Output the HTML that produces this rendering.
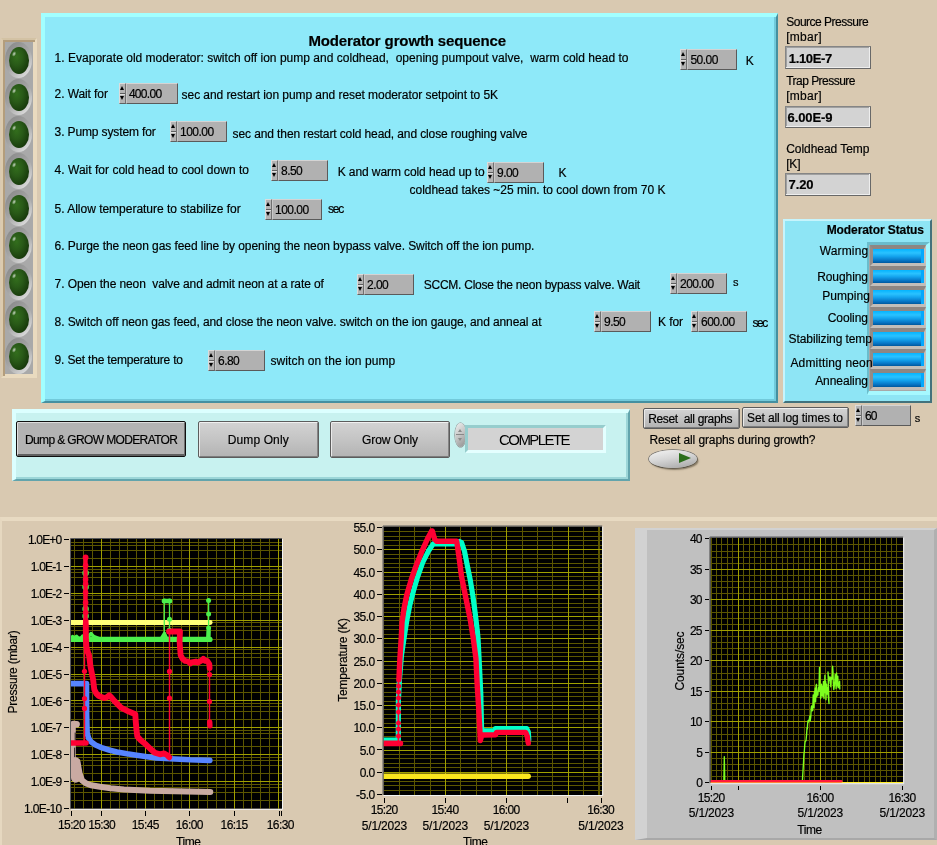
<!DOCTYPE html>
<html>
<head>
<meta charset="utf-8">
<title>Moderator growth sequence</title>
<style>
html,body{margin:0;padding:0;}
body{width:937px;height:845px;overflow:hidden;background:#d9c9b1;position:relative;font-family:"Liberation Sans",sans-serif;font-size:12px;color:#000;}
.t{position:absolute;white-space:pre;line-height:normal;-webkit-text-stroke:0.18px #000;}
.abs{position:absolute;}
/* big cyan panel */
#main{position:absolute;left:41px;top:13px;width:737px;height:389.8px;background:#8ee9f9;box-sizing:border-box;border-style:solid;border-width:4px 2px 2px 4px;border-color:#a2ffff #4590a0 #4590a0 #a2ffff;box-shadow:inset -2px -2px 0 #72cadb;}
/* LED column */
#ledframe{position:absolute;left:1px;top:38px;width:36px;height:340px;box-sizing:border-box;border-style:solid;border-width:2px;border-color:#d3c2a4 #e9dabf #e9dabf #dccbae;background:#a9a9a9;box-shadow:inset 2px 2px 0 #b39d7c, inset -2px -2px 0 #e9dabf;}
.bez{position:absolute;width:27px;height:36px;border-radius:50%;background:linear-gradient(135deg,#8c8c8c 12%,#a6a6a6 50%,#dedede 90%);}
.led{position:absolute;width:19.8px;height:27px;border-radius:50%;background:radial-gradient(ellipse at 38% 36%,#336e1d 0%,#295a18 35%,#1a3e0d 70%,#0a1c03 100%);}
.led:after{content:"";position:absolute;left:3.6px;top:4.8px;width:4.4px;height:6.4px;border-radius:50%;background:radial-gradient(ellipse at center,rgba(255,255,255,.75) 0%,rgba(255,255,255,0) 70%);transform:rotate(25deg);}
/* numeric controls */
.spin{position:absolute;box-sizing:border-box;background:#b4b4b4;border-style:solid;border-width:1px;border-color:#dcdcdc #707070 #606060 #dcdcdc;}
.spin i{position:absolute;left:0;width:0;height:0;}
.spin .up{left:0;top:1.9px;border-left:2.5px solid transparent;border-right:2.5px solid transparent;border-bottom:4.4px solid #000;}
.spin .dn{left:0;bottom:2.6px;border-left:2.5px solid transparent;border-right:2.5px solid transparent;border-top:4.4px solid #000;}
.spin .mid{left:0;top:50%;width:5px;height:1px;margin-top:-1px;background:#606060;border-bottom:1px solid #e0e0e0;}
.nbox{position:absolute;box-sizing:border-box;background:#b1b1b1;border-style:solid;border-width:1px;border-color:#d4d4d4 #5a5a5a #5a5a5a #c8c8c8;}
/* indicators */
.ind{position:absolute;box-sizing:border-box;background:#d3d3d3;border-style:solid;border-width:1.5px;border-color:#858585 #686868 #686868 #858585;box-shadow:inset -1px -1px 0 #eeeeee, inset 1px 1px 0 #a0a0a0;}
/* status panel */
#status{position:absolute;left:783px;top:219px;width:149px;height:184px;box-sizing:border-box;background:#8ee5f5;border-style:solid;border-width:2px;border-color:#c6f4fc #42727c #42727c #c6f4fc;}
.bl{position:absolute;left:869.5px;width:56.2px;height:20.7px;box-sizing:border-box;border-style:solid;border-width:4px 2.8px 3px 3.2px;border-color:#8e8682 #c4c0bc #c2beba #948c88;background:linear-gradient(180deg,#04b4ff 0%,#2ac2ff 28%,#14a4ee 52%,#0674c4 82%,#00589e 100%);}
.bl:after{content:"";position:absolute;right:0;top:0;bottom:0;width:2.8px;background:#04a8fc;}
#arr{position:absolute;left:866.7px;top:241.7px;width:63px;height:153.5px;box-sizing:border-box;border-style:solid;border-width:3.3px 4px 4.2px 2.8px;border-color:#6abccc #a6f8ff #a6f8ff #6abccc;background:#a8a8a8;}
/* buttons */
.btn{position:absolute;box-sizing:border-box;background:linear-gradient(180deg,#d2d2d2 0%,#c4c4c4 50%,#b4b4b4 100%);border-style:solid;border-width:1.5px;border-color:#f0f0f0 #858585 #7c7c7c #eaeaea;outline:1px solid #5c5c5c;border-radius:1px;}
.btn.def{outline:1.2px solid #101010;background:#b3b3b3;border-width:1.5px 1px 2px 1.5px;border-color:#dcdcdc #707070 #606060 #dedede;}
#ctl{position:absolute;left:12px;top:409px;width:618px;height:72px;box-sizing:border-box;background:#c8f2f0;border-style:solid;border-width:4px 2px 2px 4px;border-color:#dcffff #62a4ac #62a4ac #dcffff;box-shadow:inset -2px -2px 0 #9cd6d8;}
/* graph region */
#gpanel{position:absolute;left:0;top:517px;width:937px;height:328px;box-sizing:border-box;border-top:4px solid #e8dac2;border-left:2px solid #e6d8c0;background:#d9c9b1;}
#g3{position:absolute;left:635px;top:528px;width:302px;height:312px;box-sizing:border-box;background:#c0c0c0;border-top:2px solid #d2d2d2;border-left:12px solid #d2d2d2;border-right:3px solid #b0b0b0;border-bottom:2px solid #a8a8a8;}
svg{position:absolute;left:0;top:0;}
</style>
</head>
<body>
<div id="root" style="position:absolute;left:0;top:0;width:937px;height:845px;will-change:transform;">
<div id="ledframe"></div>
<div class="bez" style="left:5.4px;top:42.3px"></div>
<div class="led" style="left:8.8px;top:46.7px"></div>
<div class="bez" style="left:5.4px;top:79.3px"></div>
<div class="led" style="left:8.8px;top:83.7px"></div>
<div class="bez" style="left:5.4px;top:116.3px"></div>
<div class="led" style="left:8.8px;top:120.7px"></div>
<div class="bez" style="left:5.4px;top:153.3px"></div>
<div class="led" style="left:8.8px;top:157.7px"></div>
<div class="bez" style="left:5.4px;top:190.3px"></div>
<div class="led" style="left:8.8px;top:194.7px"></div>
<div class="bez" style="left:5.4px;top:227.3px"></div>
<div class="led" style="left:8.8px;top:231.7px"></div>
<div class="bez" style="left:5.4px;top:264.3px"></div>
<div class="led" style="left:8.8px;top:268.7px"></div>
<div class="bez" style="left:5.4px;top:301.3px"></div>
<div class="led" style="left:8.8px;top:305.7px"></div>
<div class="bez" style="left:5.4px;top:338.3px"></div>
<div class="led" style="left:8.8px;top:342.7px"></div>
<div id="main"></div>
<span class="t" style="left:308.40px;top:32.02px;font-size:15px;letter-spacing:-0.128px;font-weight:bold;">Moderator growth sequence</span>
<span class="t" style="left:54.60px;top:51.14px;font-size:12px;letter-spacing:0.017px;">1. Evaporate old moderator: switch off ion pump and coldhead,  opening pumpout valve,  warm cold head to</span>
<div class="spin" style="left:680px;top:49px;width:7px;height:21px"><i class="up"></i><i class="mid"></i><i class="dn"></i></div>
<div class="nbox" style="left:687px;top:49px;width:50px;height:21px"></div>
<span class="t" style="left:690.40px;top:53.34px;font-size:12px;letter-spacing:-0.526px;">50.00</span>
<span class="t" style="left:745.70px;top:54.14px;font-size:12px;letter-spacing:-1.204px;">K</span>
<span class="t" style="left:54.60px;top:87.14px;font-size:12px;letter-spacing:-0.093px;">2. Wait for</span>
<div class="spin" style="left:119px;top:83px;width:7px;height:21px"><i class="up"></i><i class="mid"></i><i class="dn"></i></div>
<div class="nbox" style="left:126px;top:83px;width:52px;height:21px"></div>
<span class="t" style="left:128.90px;top:86.94px;font-size:12px;letter-spacing:-0.701px;">400.00</span>
<span class="t" style="left:181.60px;top:87.74px;font-size:12px;letter-spacing:-0.065px;">sec and restart ion pump and reset moderator setpoint to 5K</span>
<span class="t" style="left:54.60px;top:125.14px;font-size:12px;letter-spacing:-0.127px;">3. Pump system for</span>
<div class="spin" style="left:170px;top:121px;width:7px;height:21px"><i class="up"></i><i class="mid"></i><i class="dn"></i></div>
<div class="nbox" style="left:177px;top:121px;width:50px;height:21px"></div>
<span class="t" style="left:180.00px;top:124.74px;font-size:12px;letter-spacing:-0.514px;">100.00</span>
<span class="t" style="left:232.60px;top:126.94px;font-size:12px;letter-spacing:-0.108px;">sec and then restart cold head, and close roughing valve</span>
<span class="t" style="left:54.60px;top:163.14px;font-size:12px;letter-spacing:0.020px;">4. Wait for cold head to cool down to</span>
<div class="spin" style="left:271px;top:160px;width:7px;height:21px"><i class="up"></i><i class="mid"></i><i class="dn"></i></div>
<div class="nbox" style="left:278px;top:160px;width:50px;height:21px"></div>
<span class="t" style="left:281.00px;top:163.94px;font-size:12px;letter-spacing:-0.545px;">8.50</span>
<span class="t" style="left:337.70px;top:165.14px;font-size:12px;letter-spacing:-0.093px;">K and warm cold head up to</span>
<div class="spin" style="left:487px;top:162px;width:7px;height:21px"><i class="up"></i><i class="mid"></i><i class="dn"></i></div>
<div class="nbox" style="left:494px;top:162px;width:50px;height:21px"></div>
<span class="t" style="left:497.00px;top:165.94px;font-size:12px;letter-spacing:-0.545px;">9.00</span>
<span class="t" style="left:558.60px;top:166.14px;font-size:12px;letter-spacing:-1.604px;">K</span>
<span class="t" style="left:409.50px;top:182.54px;font-size:12px;letter-spacing:-0.013px;">coldhead takes ~25 min. to cool down from 70 K</span>
<span class="t" style="left:54.60px;top:201.64px;font-size:12px;letter-spacing:-0.016px;">5. Allow temperature to stabilize for</span>
<div class="spin" style="left:265px;top:199px;width:7px;height:21px"><i class="up"></i><i class="mid"></i><i class="dn"></i></div>
<div class="nbox" style="left:272px;top:199px;width:50px;height:21px"></div>
<span class="t" style="left:275.00px;top:202.64px;font-size:12px;letter-spacing:-0.514px;">100.00</span>
<span class="t" style="left:327.90px;top:202.14px;font-size:12px;letter-spacing:-1.137px;">sec</span>
<span class="t" style="left:54.60px;top:238.84px;font-size:12px;letter-spacing:-0.071px;">6. Purge the neon gas feed line by opening the neon bypass valve. Switch off the ion pump.</span>
<span class="t" style="left:54.60px;top:277.34px;font-size:12px;letter-spacing:-0.098px;">7. Open the neon  valve and admit neon at a rate of</span>
<div class="spin" style="left:357px;top:274px;width:7px;height:21px"><i class="up"></i><i class="mid"></i><i class="dn"></i></div>
<div class="nbox" style="left:364px;top:274px;width:50px;height:21px"></div>
<span class="t" style="left:367.00px;top:277.64px;font-size:12px;letter-spacing:-0.545px;">2.00</span>
<span class="t" style="left:423.70px;top:277.84px;font-size:12px;letter-spacing:-0.241px;">SCCM. Close the neon bypass valve. Wait</span>
<div class="spin" style="left:670px;top:273px;width:7px;height:21px"><i class="up"></i><i class="mid"></i><i class="dn"></i></div>
<div class="nbox" style="left:677px;top:273px;width:50px;height:21px"></div>
<span class="t" style="left:680.00px;top:276.64px;font-size:12px;letter-spacing:-0.514px;">200.00</span>
<span class="t" style="left:733.00px;top:276.05px;font-size:11px;letter-spacing:-1.000px;">s</span>
<span class="t" style="left:54.60px;top:315.34px;font-size:12px;letter-spacing:-0.100px;">8. Switch off neon gas feed, and close the neon valve. switch on the ion gauge, and anneal at</span>
<div class="spin" style="left:594px;top:311px;width:7px;height:21px"><i class="up"></i><i class="mid"></i><i class="dn"></i></div>
<div class="nbox" style="left:601px;top:311px;width:50px;height:21px"></div>
<span class="t" style="left:604.00px;top:314.94px;font-size:12px;letter-spacing:-0.545px;">9.50</span>
<span class="t" style="left:658.00px;top:315.34px;font-size:12px;letter-spacing:-0.086px;">K for</span>
<div class="spin" style="left:691px;top:311px;width:7px;height:21px"><i class="up"></i><i class="mid"></i><i class="dn"></i></div>
<div class="nbox" style="left:698px;top:311px;width:49px;height:21px"></div>
<span class="t" style="left:701.00px;top:314.94px;font-size:12px;letter-spacing:-0.514px;">600.00</span>
<span class="t" style="left:752.50px;top:316.14px;font-size:12px;letter-spacing:-1.437px;">sec</span>
<span class="t" style="left:54.60px;top:353.34px;font-size:12px;letter-spacing:-0.181px;">9. Set the temperature to</span>
<div class="spin" style="left:208px;top:350px;width:7px;height:21px"><i class="up"></i><i class="mid"></i><i class="dn"></i></div>
<div class="nbox" style="left:215px;top:350px;width:50px;height:21px"></div>
<span class="t" style="left:218.00px;top:353.74px;font-size:12px;letter-spacing:-0.545px;">6.80</span>
<span class="t" style="left:270.50px;top:354.14px;font-size:12px;letter-spacing:0.093px;">switch on the ion pump</span>
<span class="t" style="left:786.20px;top:15.24px;font-size:12px;letter-spacing:-0.491px;">Source Pressure</span>
<span class="t" style="left:786.20px;top:29.64px;font-size:12px;letter-spacing:0.298px;">[mbar]</span>
<div class="ind" style="left:785.3px;top:46.4px;width:85.8px;height:22.4px"></div>
<span class="t" style="left:788.80px;top:50.84px;font-size:13px;letter-spacing:-0.339px;font-weight:bold;">1.10E-7</span>
<span class="t" style="left:786.20px;top:74.34px;font-size:12px;letter-spacing:-0.524px;">Trap Pressure</span>
<span class="t" style="left:786.20px;top:88.54px;font-size:12px;letter-spacing:0.298px;">[mbar]</span>
<div class="ind" style="left:785.3px;top:105.5px;width:85.8px;height:22.4px"></div>
<span class="t" style="left:787.60px;top:109.83px;font-size:13px;letter-spacing:-0.106px;font-weight:bold;">6.00E-9</span>
<span class="t" style="left:786.20px;top:141.94px;font-size:12px;letter-spacing:-0.053px;">Coldhead Temp</span>
<span class="t" style="left:786.20px;top:156.84px;font-size:12px;letter-spacing:-0.186px;">[K]</span>
<div class="ind" style="left:785.3px;top:173.4px;width:85.8px;height:22.4px"></div>
<span class="t" style="left:788.60px;top:177.44px;font-size:13px;letter-spacing:-0.134px;font-weight:bold;">7.20</span>
<div id="status"></div>
<span class="t" style="left:826.70px;top:222.84px;font-size:12px;letter-spacing:-0.092px;font-weight:bold;">Moderator Status</span>
<div id="arr"></div>
<div class="bl" style="top:245.0px"></div>
<span class="t" style="left:819.70px;top:243.84px;font-size:12px;letter-spacing:0.156px;">Warming</span>
<div class="bl" style="top:265.7px"></div>
<span class="t" style="left:817.20px;top:269.94px;font-size:12px;letter-spacing:-0.082px;">Roughing</span>
<div class="bl" style="top:286.4px"></div>
<span class="t" style="left:822.20px;top:288.54px;font-size:12px;letter-spacing:0.073px;">Pumping</span>
<div class="bl" style="top:307.2px"></div>
<span class="t" style="left:827.70px;top:310.94px;font-size:12px;letter-spacing:-0.066px;">Cooling</span>
<div class="bl" style="top:327.9px"></div>
<span class="t" style="left:788.60px;top:332.04px;font-size:12px;letter-spacing:-0.094px;">Stabilizing temp</span>
<div class="bl" style="top:348.6px"></div>
<span class="t" style="left:790.40px;top:355.64px;font-size:12px;letter-spacing:0.165px;">Admitting neon</span>
<div class="bl" style="top:369.3px"></div>
<span class="t" style="left:815.20px;top:374.24px;font-size:12px;letter-spacing:-0.073px;">Annealing</span>
<div id="ctl"></div>
<div class="btn def" style="left:17.2px;top:422.2px;width:168.3px;height:33.6px"></div>
<span class="t" style="left:25.00px;top:432.94px;font-size:12px;letter-spacing:-0.629px;">Dump &amp; GROW MODERATOR</span>
<div class="btn" style="left:199px;top:422px;width:118.6px;height:34.6px"></div>
<span class="t" style="left:227.70px;top:432.94px;font-size:12px;letter-spacing:0.123px;">Dump Only</span>
<div class="btn" style="left:330.6px;top:422px;width:118.6px;height:34.6px"></div>
<span class="t" style="left:362.00px;top:432.94px;font-size:12px;letter-spacing:-0.085px;">Grow Only</span>
<div class="abs" style="left:454.5px;top:423px;width:11px;height:23.5px;border-radius:50%;background:linear-gradient(135deg,#f0f0f0,#c4c4c4 50%,#8c8c8c);box-shadow:0 0 0 .6px #8a8a8a"></div>
<div class="abs" style="left:456px;top:434.3px;width:8px;height:1px;background:#888"></div>
<div class="abs" style="left:458px;top:428.5px;width:0;height:0;border-left:2px solid transparent;border-right:2px solid transparent;border-bottom:3.5px solid #8a8a8a"></div>
<div class="abs" style="left:458px;top:438px;width:0;height:0;border-left:2px solid transparent;border-right:2px solid transparent;border-top:3.5px solid #8a8a8a"></div>
<div class="ind" style="left:465.3px;top:424.5px;width:140.7px;height:28.8px;background:#d3d3d3;border-width:3.5px;border-color:#96cdcd #e4ffff #e4ffff #96cdcd;box-shadow:none"></div>
<span class="t" style="left:499.05px;top:431.23px;font-size:15px;letter-spacing:-1.574px;-webkit-text-stroke:0;">COMPLETE</span>
<div class="btn" style="left:644px;top:409px;width:95px;height:18.5px"></div>
<span class="t" style="left:648.20px;top:411.74px;font-size:12px;letter-spacing:-0.353px;">Reset  all graphs</span>
<div class="btn" style="left:743px;top:408px;width:105px;height:18.5px"></div>
<span class="t" style="left:747.00px;top:410.74px;font-size:12px;letter-spacing:-0.108px;">Set all log times to</span>
<div class="spin" style="left:855px;top:405px;width:7px;height:21px"><i class="up"></i><i class="mid"></i><i class="dn"></i></div>
<div class="nbox" style="left:862px;top:405px;width:49px;height:21px"></div>
<span class="t" style="left:865.00px;top:408.74px;font-size:12px;letter-spacing:-0.934px;">60</span>
<span class="t" style="left:914.70px;top:412.05px;font-size:11px;letter-spacing:-1.200px;">s</span>
<span class="t" style="left:649.50px;top:432.94px;font-size:12px;letter-spacing:-0.114px;">Reset all graphs during growth?</span>
<div class="abs" style="left:648.8px;top:449.5px;width:47.8px;height:18px;border-radius:50%;background:linear-gradient(170deg,#f4f4f4 0%,#d6d6d6 45%,#a2a2a2 100%);box-shadow:1.5px 2px 1.5px rgba(80,70,50,.6), 0 0 0 .8px #6c6c6c"></div>
<div class="abs" style="left:678.7px;top:453.3px;width:0;height:0;border-top:5.1px solid transparent;border-bottom:5.1px solid transparent;border-left:12.8px solid #2c6e1c"></div>
<div id="gpanel"></div>
<div id="g3"></div>
<svg width="937" height="845" viewBox="0 0 937 845" shape-rendering="auto"><rect x="71.0" y="539.0" width="211.00" height="269.80" fill="#000"/><clipPath id="c1"><rect x="71.0" y="539.0" width="211.00" height="269.80"/></clipPath><g clip-path="url(#c1)"><path d="M71.00,558.5H282.00" stroke="#5c5600" stroke-width="1" shape-rendering="crispEdges"/><path d="M71.00,550.5H282.00" stroke="#5c5600" stroke-width="1" shape-rendering="crispEdges"/><path d="M71.00,545.5H282.00" stroke="#5c5600" stroke-width="1" shape-rendering="crispEdges"/><path d="M71.00,542.5H282.00" stroke="#5c5600" stroke-width="1" shape-rendering="crispEdges"/><path d="M71.00,585.5H282.00" stroke="#5c5600" stroke-width="1" shape-rendering="crispEdges"/><path d="M71.00,577.5H282.00" stroke="#5c5600" stroke-width="1" shape-rendering="crispEdges"/><path d="M71.00,572.5H282.00" stroke="#5c5600" stroke-width="1" shape-rendering="crispEdges"/><path d="M71.00,569.5H282.00" stroke="#5c5600" stroke-width="1" shape-rendering="crispEdges"/><path d="M71.00,612.5H282.00" stroke="#5c5600" stroke-width="1" shape-rendering="crispEdges"/><path d="M71.00,604.5H282.00" stroke="#5c5600" stroke-width="1" shape-rendering="crispEdges"/><path d="M71.00,599.5H282.00" stroke="#5c5600" stroke-width="1" shape-rendering="crispEdges"/><path d="M71.00,595.5H282.00" stroke="#5c5600" stroke-width="1" shape-rendering="crispEdges"/><path d="M71.00,639.5H282.00" stroke="#5c5600" stroke-width="1" shape-rendering="crispEdges"/><path d="M71.00,630.5H282.00" stroke="#5c5600" stroke-width="1" shape-rendering="crispEdges"/><path d="M71.00,626.5H282.00" stroke="#5c5600" stroke-width="1" shape-rendering="crispEdges"/><path d="M71.00,622.5H282.00" stroke="#5c5600" stroke-width="1" shape-rendering="crispEdges"/><path d="M71.00,665.5H282.00" stroke="#5c5600" stroke-width="1" shape-rendering="crispEdges"/><path d="M71.00,657.5H282.00" stroke="#5c5600" stroke-width="1" shape-rendering="crispEdges"/><path d="M71.00,653.5H282.00" stroke="#5c5600" stroke-width="1" shape-rendering="crispEdges"/><path d="M71.00,649.5H282.00" stroke="#5c5600" stroke-width="1" shape-rendering="crispEdges"/><path d="M71.00,692.5H282.00" stroke="#5c5600" stroke-width="1" shape-rendering="crispEdges"/><path d="M71.00,684.5H282.00" stroke="#5c5600" stroke-width="1" shape-rendering="crispEdges"/><path d="M71.00,679.5H282.00" stroke="#5c5600" stroke-width="1" shape-rendering="crispEdges"/><path d="M71.00,676.5H282.00" stroke="#5c5600" stroke-width="1" shape-rendering="crispEdges"/><path d="M71.00,719.5H282.00" stroke="#5c5600" stroke-width="1" shape-rendering="crispEdges"/><path d="M71.00,711.5H282.00" stroke="#5c5600" stroke-width="1" shape-rendering="crispEdges"/><path d="M71.00,706.5H282.00" stroke="#5c5600" stroke-width="1" shape-rendering="crispEdges"/><path d="M71.00,703.5H282.00" stroke="#5c5600" stroke-width="1" shape-rendering="crispEdges"/><path d="M71.00,746.5H282.00" stroke="#5c5600" stroke-width="1" shape-rendering="crispEdges"/><path d="M71.00,738.5H282.00" stroke="#5c5600" stroke-width="1" shape-rendering="crispEdges"/><path d="M71.00,733.5H282.00" stroke="#5c5600" stroke-width="1" shape-rendering="crispEdges"/><path d="M71.00,730.5H282.00" stroke="#5c5600" stroke-width="1" shape-rendering="crispEdges"/><path d="M71.00,773.5H282.00" stroke="#5c5600" stroke-width="1" shape-rendering="crispEdges"/><path d="M71.00,765.5H282.00" stroke="#5c5600" stroke-width="1" shape-rendering="crispEdges"/><path d="M71.00,760.5H282.00" stroke="#5c5600" stroke-width="1" shape-rendering="crispEdges"/><path d="M71.00,757.5H282.00" stroke="#5c5600" stroke-width="1" shape-rendering="crispEdges"/><path d="M71.00,800.5H282.00" stroke="#5c5600" stroke-width="1" shape-rendering="crispEdges"/><path d="M71.00,792.5H282.00" stroke="#5c5600" stroke-width="1" shape-rendering="crispEdges"/><path d="M71.00,787.5H282.00" stroke="#5c5600" stroke-width="1" shape-rendering="crispEdges"/><path d="M71.00,784.5H282.00" stroke="#5c5600" stroke-width="1" shape-rendering="crispEdges"/><path d="M74.5,539.00V808.80" stroke="#5c5600" stroke-width="1" shape-rendering="crispEdges"/><path d="M83.5,539.00V808.80" stroke="#5c5600" stroke-width="1" shape-rendering="crispEdges"/><path d="M92.5,539.00V808.80" stroke="#5c5600" stroke-width="1" shape-rendering="crispEdges"/><path d="M110.5,539.00V808.80" stroke="#5c5600" stroke-width="1" shape-rendering="crispEdges"/><path d="M119.5,539.00V808.80" stroke="#5c5600" stroke-width="1" shape-rendering="crispEdges"/><path d="M127.5,539.00V808.80" stroke="#5c5600" stroke-width="1" shape-rendering="crispEdges"/><path d="M136.5,539.00V808.80" stroke="#5c5600" stroke-width="1" shape-rendering="crispEdges"/><path d="M154.5,539.00V808.80" stroke="#5c5600" stroke-width="1" shape-rendering="crispEdges"/><path d="M163.5,539.00V808.80" stroke="#5c5600" stroke-width="1" shape-rendering="crispEdges"/><path d="M172.5,539.00V808.80" stroke="#5c5600" stroke-width="1" shape-rendering="crispEdges"/><path d="M181.5,539.00V808.80" stroke="#5c5600" stroke-width="1" shape-rendering="crispEdges"/><path d="M198.5,539.00V808.80" stroke="#5c5600" stroke-width="1" shape-rendering="crispEdges"/><path d="M207.5,539.00V808.80" stroke="#5c5600" stroke-width="1" shape-rendering="crispEdges"/><path d="M216.5,539.00V808.80" stroke="#5c5600" stroke-width="1" shape-rendering="crispEdges"/><path d="M225.5,539.00V808.80" stroke="#5c5600" stroke-width="1" shape-rendering="crispEdges"/><path d="M243.5,539.00V808.80" stroke="#5c5600" stroke-width="1" shape-rendering="crispEdges"/><path d="M251.5,539.00V808.80" stroke="#5c5600" stroke-width="1" shape-rendering="crispEdges"/><path d="M260.5,539.00V808.80" stroke="#5c5600" stroke-width="1" shape-rendering="crispEdges"/><path d="M269.5,539.00V808.80" stroke="#5c5600" stroke-width="1" shape-rendering="crispEdges"/><path d="M71.00,566.5H282.00" stroke="#a0a000" stroke-width="1" shape-rendering="crispEdges"/><path d="M71.00,593.5H282.00" stroke="#a0a000" stroke-width="1" shape-rendering="crispEdges"/><path d="M71.00,620.5H282.00" stroke="#a0a000" stroke-width="1" shape-rendering="crispEdges"/><path d="M71.00,647.5H282.00" stroke="#a0a000" stroke-width="1" shape-rendering="crispEdges"/><path d="M71.00,674.5H282.00" stroke="#a0a000" stroke-width="1" shape-rendering="crispEdges"/><path d="M71.00,700.5H282.00" stroke="#a0a000" stroke-width="1" shape-rendering="crispEdges"/><path d="M71.00,727.5H282.00" stroke="#a0a000" stroke-width="1" shape-rendering="crispEdges"/><path d="M71.00,754.5H282.00" stroke="#a0a000" stroke-width="1" shape-rendering="crispEdges"/><path d="M71.00,781.5H282.00" stroke="#a0a000" stroke-width="1" shape-rendering="crispEdges"/><path d="M101.5,539.00V808.80" stroke="#a0a000" stroke-width="1" shape-rendering="crispEdges"/><path d="M145.5,539.00V808.80" stroke="#a0a000" stroke-width="1" shape-rendering="crispEdges"/><path d="M189.5,539.00V808.80" stroke="#a0a000" stroke-width="1" shape-rendering="crispEdges"/><path d="M234.5,539.00V808.80" stroke="#a0a000" stroke-width="1" shape-rendering="crispEdges"/><path d="M278.5,539.00V808.80" stroke="#a0a000" stroke-width="1" shape-rendering="crispEdges"/><path d="M70.0,622.5 L210.2,622.5" stroke="#ffff78" stroke-width="4.8" fill="none" stroke-linejoin="round" stroke-linecap="round" /><path d="M70.0,639.4 L210.0,639.4" stroke="#4cf04c" stroke-width="5.2" fill="none" stroke-linejoin="round" stroke-linecap="round" /><path d="M71.0,638.4 L72.6,636.6 L74.5,638.2 L76.6,636.4 L78.5,638.4 L81.0,638.4 L82.6,636.2 L84.0,638.4 L88.5,636.4 L91.0,633.6 L93.5,636.4 L96.5,637.6 L99.0,638.6" stroke="#4cf04c" stroke-width="3.6" fill="none" stroke-linejoin="round" stroke-linecap="round" /><path d="M161.5,638.5 L164.4,633.6 L166.5,638.5" stroke="#4cf04c" stroke-width="3.6" fill="none" stroke-linejoin="round" stroke-linecap="round" /><path d="M208.3,639.0 L208.6,631.0" stroke="#4cf04c" stroke-width="4.5" fill="none" stroke-linejoin="round" stroke-linecap="round" /><path d="M164.3,637.0 L164.3,601.0 L169.5,601.0 L169.5,637.0" stroke="#4cf04c" stroke-width="1.3" fill="none" stroke-linejoin="round" stroke-linecap="round" /><path d="M164.0,601.0 L170.0,601.0" stroke="#4cf04c" stroke-width="4.6" fill="none" stroke-linejoin="round" stroke-linecap="round" /><circle cx="164.3" cy="601.0" r="2.5" fill="#4cf04c"/><circle cx="169.6" cy="601.0" r="2.5" fill="#4cf04c"/><circle cx="169.5" cy="619.3" r="2.5" fill="#4cf04c"/><circle cx="169.3" cy="630.0" r="2.5" fill="#4cf04c"/><path d="M208.6,637.0 L208.6,600.4" stroke="#4cf04c" stroke-width="1.3" fill="none" stroke-linejoin="round" stroke-linecap="round" /><circle cx="208.6" cy="600.4" r="2.5" fill="#4cf04c"/><circle cx="208.6" cy="614.1" r="2.5" fill="#4cf04c"/><circle cx="208.6" cy="628.0" r="2.5" fill="#4cf04c"/><circle cx="85.6" cy="573.0" r="3.3" fill="#4cf04c"/><circle cx="85.6" cy="587.0" r="3.3" fill="#4cf04c"/><circle cx="85.6" cy="609.0" r="3.3" fill="#4cf04c"/><circle cx="85.6" cy="616.0" r="3.3" fill="#4cf04c"/><path d="M73.4,724.0 L76.6,724.2" stroke="#c9aaa2" stroke-width="6.6" fill="none" stroke-linejoin="round" stroke-linecap="round" /><path d="M73.3,726.0 L73.3,760.0" stroke="#c9aaa2" stroke-width="5.0" fill="none" stroke-linejoin="round" stroke-linecap="round" /><path d="M75.2,733.0 L75.2,741.0" stroke="#000" stroke-width="0.8" fill="none" stroke-linejoin="round" stroke-linecap="round" /><path d="M74.6,748.0 L74.6,757.0" stroke="#000" stroke-width="0.8" fill="none" stroke-linejoin="round" stroke-linecap="round" /><path d="M75.5,762.0 L75.7,778.0" stroke="#c9aaa2" stroke-width="9.4" fill="none" stroke-linejoin="round" stroke-linecap="round" /><path d="M77.4,761.5 L78.4,767.0 L79.6,773.5 L82.0,780.3 L86.0,783.4 L91.0,785.2 L100.0,786.8 L110.6,788.2 L124.0,789.4 L150.0,790.7 L175.0,791.3 L210.3,791.9" stroke="#c9aaa2" stroke-width="6.0" fill="none" stroke-linejoin="round" stroke-linecap="round" /><path d="M70.0,683.6 L86.5,683.6 L86.6,713.0 L87.1,732.6 L88.5,738.0 L91.0,741.7 L95.5,745.0 L101.5,747.6 L109.0,750.0 L117.0,752.0 L127.0,753.8 L136.6,755.3 L156.0,758.0 L175.0,759.0 L190.0,759.8 L209.8,760.4" stroke="#5684ff" stroke-width="5.6" fill="none" stroke-linejoin="round" stroke-linecap="round" /><path d="M70.0,743.0 L86.0,743.0" stroke="#ff0033" stroke-width="5.6" fill="none" stroke-linejoin="round" stroke-linecap="round" /><path d="M84.5,743.0 L84.5,560.0" stroke="#ff0033" stroke-width="1.4" fill="none" stroke-linejoin="round" stroke-linecap="round" /><circle cx="84.5" cy="708.4" r="2.6" fill="#ff0033"/><circle cx="84.5" cy="698.6" r="2.6" fill="#ff0033"/><circle cx="84.5" cy="671.3" r="2.6" fill="#ff0033"/><path d="M85.6,559.0 L85.6,627.0" stroke="#ff0033" stroke-width="4.2" fill="none" stroke-linejoin="round" stroke-linecap="round" /><circle cx="85.6" cy="565.5" r="2.8" fill="#ff0033"/><circle cx="85.6" cy="579.5" r="2.8" fill="#ff0033"/><circle cx="85.6" cy="584.0" r="2.8" fill="#ff0033"/><circle cx="85.6" cy="592.5" r="2.8" fill="#ff0033"/><circle cx="85.6" cy="602.5" r="2.8" fill="#ff0033"/><circle cx="85.7" cy="612.5" r="2.8" fill="#ff0033"/><circle cx="85.8" cy="621.0" r="2.8" fill="#ff0033"/><path d="M85.8,624.0 L85.9,640.0 L86.5,648.0 L89.1,655.6 L90.4,666.0 L93.0,679.0 L94.3,689.5 L96.3,693.5 L98.9,696.0 L104.0,698.0 L106.8,697.3 L109.3,695.3 L111.5,697.5 L114.5,701.2 L121.0,707.7 L128.8,711.6 L135.3,714.2 L135.7,720.7 L136.4,729.2 L137.3,736.4 L141.0,740.5 L145.7,744.3 L150.0,748.5 L154.8,752.7 L160.0,754.3 L164.0,753.4 L167.0,755.0 L169.2,757.3" stroke="#ff0033" stroke-width="5.9" fill="none" stroke-linejoin="round" stroke-linecap="round" /><circle cx="85.6" cy="557.5" r="2.9" fill="#ff0033"/><path d="M169.5,757.0 L169.5,631.0" stroke="#ff0033" stroke-width="1.4" fill="none" stroke-linejoin="round" stroke-linecap="round" /><circle cx="169.5" cy="671.4" r="2.6" fill="#ff0033"/><circle cx="169.5" cy="698.2" r="2.6" fill="#ff0033"/><path d="M169.0,631.5 L180.0,631.5 L179.6,642.0 L180.6,655.1 L182.5,658.8 L185.2,661.0 L188.0,661.4 L190.5,663.4 L191.7,662.3 L196.0,661.5 L198.0,662.6 L202.0,660.3 L203.3,658.8 L204.8,660.8 L207.3,661.0 L209.3,664.0 L209.6,668.0" stroke="#ff0033" stroke-width="5.8" fill="none" stroke-linejoin="round" stroke-linecap="round" /><path d="M209.5,668.0 L209.5,724.0" stroke="#ff0033" stroke-width="1.4" fill="none" stroke-linejoin="round" stroke-linecap="round" /><circle cx="209.6" cy="674.6" r="2.6" fill="#ff0033"/><circle cx="209.5" cy="701.5" r="2.6" fill="#ff0033"/><path d="M209.7,722.0 L209.9,725.8" stroke="#ff0033" stroke-width="5.4" fill="none" stroke-linejoin="round" stroke-linecap="round" /></g><path d="M70.5,808.8V538.5H282.0" stroke="#5a5a5a" stroke-width="1" fill="none"/><path d="M71.0,809.3H282.5V539.0" stroke="#f4f4f4" stroke-width="1" fill="none"/><path d="M64,539.5H69" stroke="#000" stroke-width="1" shape-rendering="crispEdges"/><path d="M64,566.5H69" stroke="#000" stroke-width="1" shape-rendering="crispEdges"/><path d="M64,593.5H69" stroke="#000" stroke-width="1" shape-rendering="crispEdges"/><path d="M64,620.5H69" stroke="#000" stroke-width="1" shape-rendering="crispEdges"/><path d="M64,647.5H69" stroke="#000" stroke-width="1" shape-rendering="crispEdges"/><path d="M64,674.5H69" stroke="#000" stroke-width="1" shape-rendering="crispEdges"/><path d="M64,700.5H69" stroke="#000" stroke-width="1" shape-rendering="crispEdges"/><path d="M64,727.5H69" stroke="#000" stroke-width="1" shape-rendering="crispEdges"/><path d="M64,754.5H69" stroke="#000" stroke-width="1" shape-rendering="crispEdges"/><path d="M64,781.5H69" stroke="#000" stroke-width="1" shape-rendering="crispEdges"/><path d="M64,808.5H69" stroke="#000" stroke-width="1" shape-rendering="crispEdges"/><path d="M71.5,811V816" stroke="#000" stroke-width="1" shape-rendering="crispEdges"/><path d="M101.5,811V816" stroke="#000" stroke-width="1" shape-rendering="crispEdges"/><path d="M145.5,811V816" stroke="#000" stroke-width="1" shape-rendering="crispEdges"/><path d="M189.5,811V816" stroke="#000" stroke-width="1" shape-rendering="crispEdges"/><path d="M234.5,811V816" stroke="#000" stroke-width="1" shape-rendering="crispEdges"/><path d="M279.5,811V816" stroke="#000" stroke-width="1" shape-rendering="crispEdges"/><path d="M281.5,811V816" stroke="#000" stroke-width="1" shape-rendering="crispEdges"/><rect x="383.5" y="526.5" width="218.70" height="268.50" fill="#000"/><clipPath id="c2"><rect x="383.5" y="526.5" width="218.70" height="268.50"/></clipPath><g clip-path="url(#c2)"><path d="M383.50,531.5H602.20" stroke="#5c5600" stroke-width="1" shape-rendering="crispEdges"/><path d="M383.50,536.5H602.20" stroke="#5c5600" stroke-width="1" shape-rendering="crispEdges"/><path d="M383.50,540.5H602.20" stroke="#5c5600" stroke-width="1" shape-rendering="crispEdges"/><path d="M383.50,545.5H602.20" stroke="#5c5600" stroke-width="1" shape-rendering="crispEdges"/><path d="M383.50,554.5H602.20" stroke="#5c5600" stroke-width="1" shape-rendering="crispEdges"/><path d="M383.50,558.5H602.20" stroke="#5c5600" stroke-width="1" shape-rendering="crispEdges"/><path d="M383.50,563.5H602.20" stroke="#5c5600" stroke-width="1" shape-rendering="crispEdges"/><path d="M383.50,567.5H602.20" stroke="#5c5600" stroke-width="1" shape-rendering="crispEdges"/><path d="M383.50,576.5H602.20" stroke="#5c5600" stroke-width="1" shape-rendering="crispEdges"/><path d="M383.50,580.5H602.20" stroke="#5c5600" stroke-width="1" shape-rendering="crispEdges"/><path d="M383.50,585.5H602.20" stroke="#5c5600" stroke-width="1" shape-rendering="crispEdges"/><path d="M383.50,589.5H602.20" stroke="#5c5600" stroke-width="1" shape-rendering="crispEdges"/><path d="M383.50,598.5H602.20" stroke="#5c5600" stroke-width="1" shape-rendering="crispEdges"/><path d="M383.50,603.5H602.20" stroke="#5c5600" stroke-width="1" shape-rendering="crispEdges"/><path d="M383.50,607.5H602.20" stroke="#5c5600" stroke-width="1" shape-rendering="crispEdges"/><path d="M383.50,612.5H602.20" stroke="#5c5600" stroke-width="1" shape-rendering="crispEdges"/><path d="M383.50,620.5H602.20" stroke="#5c5600" stroke-width="1" shape-rendering="crispEdges"/><path d="M383.50,625.5H602.20" stroke="#5c5600" stroke-width="1" shape-rendering="crispEdges"/><path d="M383.50,629.5H602.20" stroke="#5c5600" stroke-width="1" shape-rendering="crispEdges"/><path d="M383.50,634.5H602.20" stroke="#5c5600" stroke-width="1" shape-rendering="crispEdges"/><path d="M383.50,643.5H602.20" stroke="#5c5600" stroke-width="1" shape-rendering="crispEdges"/><path d="M383.50,647.5H602.20" stroke="#5c5600" stroke-width="1" shape-rendering="crispEdges"/><path d="M383.50,652.5H602.20" stroke="#5c5600" stroke-width="1" shape-rendering="crispEdges"/><path d="M383.50,656.5H602.20" stroke="#5c5600" stroke-width="1" shape-rendering="crispEdges"/><path d="M383.50,665.5H602.20" stroke="#5c5600" stroke-width="1" shape-rendering="crispEdges"/><path d="M383.50,669.5H602.20" stroke="#5c5600" stroke-width="1" shape-rendering="crispEdges"/><path d="M383.50,674.5H602.20" stroke="#5c5600" stroke-width="1" shape-rendering="crispEdges"/><path d="M383.50,678.5H602.20" stroke="#5c5600" stroke-width="1" shape-rendering="crispEdges"/><path d="M383.50,687.5H602.20" stroke="#5c5600" stroke-width="1" shape-rendering="crispEdges"/><path d="M383.50,692.5H602.20" stroke="#5c5600" stroke-width="1" shape-rendering="crispEdges"/><path d="M383.50,696.5H602.20" stroke="#5c5600" stroke-width="1" shape-rendering="crispEdges"/><path d="M383.50,701.5H602.20" stroke="#5c5600" stroke-width="1" shape-rendering="crispEdges"/><path d="M383.50,709.5H602.20" stroke="#5c5600" stroke-width="1" shape-rendering="crispEdges"/><path d="M383.50,714.5H602.20" stroke="#5c5600" stroke-width="1" shape-rendering="crispEdges"/><path d="M383.50,718.5H602.20" stroke="#5c5600" stroke-width="1" shape-rendering="crispEdges"/><path d="M383.50,723.5H602.20" stroke="#5c5600" stroke-width="1" shape-rendering="crispEdges"/><path d="M383.50,732.5H602.20" stroke="#5c5600" stroke-width="1" shape-rendering="crispEdges"/><path d="M383.50,736.5H602.20" stroke="#5c5600" stroke-width="1" shape-rendering="crispEdges"/><path d="M383.50,741.5H602.20" stroke="#5c5600" stroke-width="1" shape-rendering="crispEdges"/><path d="M383.50,745.5H602.20" stroke="#5c5600" stroke-width="1" shape-rendering="crispEdges"/><path d="M383.50,754.5H602.20" stroke="#5c5600" stroke-width="1" shape-rendering="crispEdges"/><path d="M383.50,758.5H602.20" stroke="#5c5600" stroke-width="1" shape-rendering="crispEdges"/><path d="M383.50,763.5H602.20" stroke="#5c5600" stroke-width="1" shape-rendering="crispEdges"/><path d="M383.50,767.5H602.20" stroke="#5c5600" stroke-width="1" shape-rendering="crispEdges"/><path d="M383.50,776.5H602.20" stroke="#5c5600" stroke-width="1" shape-rendering="crispEdges"/><path d="M383.50,781.5H602.20" stroke="#5c5600" stroke-width="1" shape-rendering="crispEdges"/><path d="M383.50,785.5H602.20" stroke="#5c5600" stroke-width="1" shape-rendering="crispEdges"/><path d="M383.50,790.5H602.20" stroke="#5c5600" stroke-width="1" shape-rendering="crispEdges"/><path d="M399.5,526.50V795.00" stroke="#5c5600" stroke-width="1" shape-rendering="crispEdges"/><path d="M414.5,526.50V795.00" stroke="#5c5600" stroke-width="1" shape-rendering="crispEdges"/><path d="M430.5,526.50V795.00" stroke="#5c5600" stroke-width="1" shape-rendering="crispEdges"/><path d="M460.5,526.50V795.00" stroke="#5c5600" stroke-width="1" shape-rendering="crispEdges"/><path d="M476.5,526.50V795.00" stroke="#5c5600" stroke-width="1" shape-rendering="crispEdges"/><path d="M491.5,526.50V795.00" stroke="#5c5600" stroke-width="1" shape-rendering="crispEdges"/><path d="M522.5,526.50V795.00" stroke="#5c5600" stroke-width="1" shape-rendering="crispEdges"/><path d="M537.5,526.50V795.00" stroke="#5c5600" stroke-width="1" shape-rendering="crispEdges"/><path d="M552.5,526.50V795.00" stroke="#5c5600" stroke-width="1" shape-rendering="crispEdges"/><path d="M583.5,526.50V795.00" stroke="#5c5600" stroke-width="1" shape-rendering="crispEdges"/><path d="M598.5,526.50V795.00" stroke="#5c5600" stroke-width="1" shape-rendering="crispEdges"/><path d="M599.5,526.50V795.00" stroke="#5c5600" stroke-width="1" shape-rendering="crispEdges"/><path d="M383.50,549.5H602.20" stroke="#a0a000" stroke-width="1" shape-rendering="crispEdges"/><path d="M383.50,572.5H602.20" stroke="#a0a000" stroke-width="1" shape-rendering="crispEdges"/><path d="M383.50,594.5H602.20" stroke="#a0a000" stroke-width="1" shape-rendering="crispEdges"/><path d="M383.50,616.5H602.20" stroke="#a0a000" stroke-width="1" shape-rendering="crispEdges"/><path d="M383.50,638.5H602.20" stroke="#a0a000" stroke-width="1" shape-rendering="crispEdges"/><path d="M383.50,661.5H602.20" stroke="#a0a000" stroke-width="1" shape-rendering="crispEdges"/><path d="M383.50,683.5H602.20" stroke="#a0a000" stroke-width="1" shape-rendering="crispEdges"/><path d="M383.50,705.5H602.20" stroke="#a0a000" stroke-width="1" shape-rendering="crispEdges"/><path d="M383.50,727.5H602.20" stroke="#a0a000" stroke-width="1" shape-rendering="crispEdges"/><path d="M383.50,750.5H602.20" stroke="#a0a000" stroke-width="1" shape-rendering="crispEdges"/><path d="M383.50,772.5H602.20" stroke="#a0a000" stroke-width="1" shape-rendering="crispEdges"/><path d="M445.5,526.50V795.00" stroke="#a0a000" stroke-width="1" shape-rendering="crispEdges"/><path d="M506.5,526.50V795.00" stroke="#a0a000" stroke-width="1" shape-rendering="crispEdges"/><path d="M568.5,526.50V795.00" stroke="#a0a000" stroke-width="1" shape-rendering="crispEdges"/><path d="M384.0,776.3 L528.2,776.3" stroke="#fae61e" stroke-width="5.4" fill="none" stroke-linejoin="round" stroke-linecap="round" /><path d="M384.0,740.0 L398.3,740.0 L398.4,700.0 L399.4,680.0 L401.5,655.0 L404.1,637.9 L407.0,619.4 L409.8,605.2 L413.4,591.0 L417.6,576.8 L422.6,562.6 L428.3,551.3 L433.2,543.9 L456.0,543.9 L459.5,541.5 L461.6,542.5 L464.5,551.3 L467.3,565.5 L470.2,579.7 L473.0,596.7 L475.1,612.3 L477.3,630.8 L478.0,637.9 L479.4,665.5 L480.8,693.9 L481.5,726.6 L481.8,730.8 L495.0,730.8 L495.4,728.5 L526.6,728.5 L528.3,732.0 L528.8,740.0" stroke="#00ffc8" stroke-width="5.2" fill="none" stroke-linejoin="round" stroke-linecap="round" /><path d="M384.0,743.4 L400.4,743.4" stroke="#ff0033" stroke-width="5.6" fill="none" stroke-linejoin="round" stroke-linecap="round" /><path d="M398.4,743.0 L398.4,680.0" stroke="#ff0033" stroke-width="1.6" fill="none" stroke-linejoin="round" stroke-linecap="round" /><circle cx="398.5" cy="736.0" r="2.5" fill="#ff0033"/><circle cx="398.5" cy="729.0" r="2.5" fill="#ff0033"/><circle cx="398.5" cy="723.0" r="2.5" fill="#ff0033"/><circle cx="398.5" cy="712.0" r="2.5" fill="#ff0033"/><circle cx="398.5" cy="705.0" r="2.5" fill="#ff0033"/><circle cx="398.5" cy="698.0" r="2.5" fill="#ff0033"/><circle cx="398.5" cy="692.0" r="2.5" fill="#ff0033"/><circle cx="398.6" cy="686.0" r="2.5" fill="#ff0033"/><path d="M398.9,679.7 L399.9,658.4 L401.3,637.0 L402.0,622.3 L404.1,608.0 L407.0,593.9 L411.2,579.7 L416.2,565.5 L421.9,551.3 L427.6,538.5 L431.8,530.9 L432.3,531.0 L434.7,539.2 L436.5,541.3 L456.7,541.3 L458.8,555.5 L461.6,576.8 L465.9,598.1 L470.2,619.4 L473.2,637.9 L475.9,658.4 L477.3,686.8 L478.7,708.1 L479.8,729.4 L480.3,740.5 L481.8,735.0 L495.6,734.7 L496.6,732.4 L525.6,732.4 L527.2,736.0 L528.3,743.2" stroke="#ff0033" stroke-width="5.4" fill="none" stroke-linejoin="round" stroke-linecap="round" /></g><path d="M383.0,795.0V526.0H602.2" stroke="#5a5a5a" stroke-width="1" fill="none"/><path d="M383.5,795.5H602.7V526.5" stroke="#f4f4f4" stroke-width="1" fill="none"/><path d="M377,527.5H382" stroke="#000" stroke-width="1" shape-rendering="crispEdges"/><path d="M377,549.5H382" stroke="#000" stroke-width="1" shape-rendering="crispEdges"/><path d="M377,571.5H382" stroke="#000" stroke-width="1" shape-rendering="crispEdges"/><path d="M377,594.5H382" stroke="#000" stroke-width="1" shape-rendering="crispEdges"/><path d="M377,616.5H382" stroke="#000" stroke-width="1" shape-rendering="crispEdges"/><path d="M377,638.5H382" stroke="#000" stroke-width="1" shape-rendering="crispEdges"/><path d="M377,660.5H382" stroke="#000" stroke-width="1" shape-rendering="crispEdges"/><path d="M377,683.5H382" stroke="#000" stroke-width="1" shape-rendering="crispEdges"/><path d="M377,705.5H382" stroke="#000" stroke-width="1" shape-rendering="crispEdges"/><path d="M377,727.5H382" stroke="#000" stroke-width="1" shape-rendering="crispEdges"/><path d="M377,749.5H382" stroke="#000" stroke-width="1" shape-rendering="crispEdges"/><path d="M377,772.5H382" stroke="#000" stroke-width="1" shape-rendering="crispEdges"/><path d="M377,794.5H382" stroke="#000" stroke-width="1" shape-rendering="crispEdges"/><path d="M384.5,798V803" stroke="#000" stroke-width="1" shape-rendering="crispEdges"/><path d="M445.5,798V803" stroke="#000" stroke-width="1" shape-rendering="crispEdges"/><path d="M506.5,798V803" stroke="#000" stroke-width="1" shape-rendering="crispEdges"/><path d="M567.5,798V803" stroke="#000" stroke-width="1" shape-rendering="crispEdges"/><path d="M601.5,798V803" stroke="#000" stroke-width="1" shape-rendering="crispEdges"/><rect x="710.4" y="537.5" width="192.80" height="245.70" fill="#000"/><clipPath id="c3"><rect x="710.4" y="537.5" width="192.80" height="245.70"/></clipPath><g clip-path="url(#c3)"><path d="M710.40,544.5H903.20" stroke="#5c5600" stroke-width="1" shape-rendering="crispEdges"/><path d="M710.40,551.5H903.20" stroke="#5c5600" stroke-width="1" shape-rendering="crispEdges"/><path d="M710.40,557.5H903.20" stroke="#5c5600" stroke-width="1" shape-rendering="crispEdges"/><path d="M710.40,563.5H903.20" stroke="#5c5600" stroke-width="1" shape-rendering="crispEdges"/><path d="M710.40,575.5H903.20" stroke="#5c5600" stroke-width="1" shape-rendering="crispEdges"/><path d="M710.40,581.5H903.20" stroke="#5c5600" stroke-width="1" shape-rendering="crispEdges"/><path d="M710.40,587.5H903.20" stroke="#5c5600" stroke-width="1" shape-rendering="crispEdges"/><path d="M710.40,593.5H903.20" stroke="#5c5600" stroke-width="1" shape-rendering="crispEdges"/><path d="M710.40,605.5H903.20" stroke="#5c5600" stroke-width="1" shape-rendering="crispEdges"/><path d="M710.40,612.5H903.20" stroke="#5c5600" stroke-width="1" shape-rendering="crispEdges"/><path d="M710.40,618.5H903.20" stroke="#5c5600" stroke-width="1" shape-rendering="crispEdges"/><path d="M710.40,624.5H903.20" stroke="#5c5600" stroke-width="1" shape-rendering="crispEdges"/><path d="M710.40,636.5H903.20" stroke="#5c5600" stroke-width="1" shape-rendering="crispEdges"/><path d="M710.40,642.5H903.20" stroke="#5c5600" stroke-width="1" shape-rendering="crispEdges"/><path d="M710.40,648.5H903.20" stroke="#5c5600" stroke-width="1" shape-rendering="crispEdges"/><path d="M710.40,654.5H903.20" stroke="#5c5600" stroke-width="1" shape-rendering="crispEdges"/><path d="M710.40,666.5H903.20" stroke="#5c5600" stroke-width="1" shape-rendering="crispEdges"/><path d="M710.40,673.5H903.20" stroke="#5c5600" stroke-width="1" shape-rendering="crispEdges"/><path d="M710.40,679.5H903.20" stroke="#5c5600" stroke-width="1" shape-rendering="crispEdges"/><path d="M710.40,685.5H903.20" stroke="#5c5600" stroke-width="1" shape-rendering="crispEdges"/><path d="M710.40,697.5H903.20" stroke="#5c5600" stroke-width="1" shape-rendering="crispEdges"/><path d="M710.40,703.5H903.20" stroke="#5c5600" stroke-width="1" shape-rendering="crispEdges"/><path d="M710.40,709.5H903.20" stroke="#5c5600" stroke-width="1" shape-rendering="crispEdges"/><path d="M710.40,715.5H903.20" stroke="#5c5600" stroke-width="1" shape-rendering="crispEdges"/><path d="M710.40,727.5H903.20" stroke="#5c5600" stroke-width="1" shape-rendering="crispEdges"/><path d="M710.40,734.5H903.20" stroke="#5c5600" stroke-width="1" shape-rendering="crispEdges"/><path d="M710.40,740.5H903.20" stroke="#5c5600" stroke-width="1" shape-rendering="crispEdges"/><path d="M710.40,746.5H903.20" stroke="#5c5600" stroke-width="1" shape-rendering="crispEdges"/><path d="M710.40,758.5H903.20" stroke="#5c5600" stroke-width="1" shape-rendering="crispEdges"/><path d="M710.40,764.5H903.20" stroke="#5c5600" stroke-width="1" shape-rendering="crispEdges"/><path d="M710.40,770.5H903.20" stroke="#5c5600" stroke-width="1" shape-rendering="crispEdges"/><path d="M710.40,776.5H903.20" stroke="#5c5600" stroke-width="1" shape-rendering="crispEdges"/><path d="M711.5,537.50V783.20" stroke="#5c5600" stroke-width="1" shape-rendering="crispEdges"/><path d="M716.5,537.50V783.20" stroke="#5c5600" stroke-width="1" shape-rendering="crispEdges"/><path d="M721.5,537.50V783.20" stroke="#5c5600" stroke-width="1" shape-rendering="crispEdges"/><path d="M727.5,537.50V783.20" stroke="#5c5600" stroke-width="1" shape-rendering="crispEdges"/><path d="M732.5,537.50V783.20" stroke="#5c5600" stroke-width="1" shape-rendering="crispEdges"/><path d="M743.5,537.50V783.20" stroke="#5c5600" stroke-width="1" shape-rendering="crispEdges"/><path d="M749.5,537.50V783.20" stroke="#5c5600" stroke-width="1" shape-rendering="crispEdges"/><path d="M754.5,537.50V783.20" stroke="#5c5600" stroke-width="1" shape-rendering="crispEdges"/><path d="M760.5,537.50V783.20" stroke="#5c5600" stroke-width="1" shape-rendering="crispEdges"/><path d="M765.5,537.50V783.20" stroke="#5c5600" stroke-width="1" shape-rendering="crispEdges"/><path d="M771.5,537.50V783.20" stroke="#5c5600" stroke-width="1" shape-rendering="crispEdges"/><path d="M776.5,537.50V783.20" stroke="#5c5600" stroke-width="1" shape-rendering="crispEdges"/><path d="M782.5,537.50V783.20" stroke="#5c5600" stroke-width="1" shape-rendering="crispEdges"/><path d="M787.5,537.50V783.20" stroke="#5c5600" stroke-width="1" shape-rendering="crispEdges"/><path d="M793.5,537.50V783.20" stroke="#5c5600" stroke-width="1" shape-rendering="crispEdges"/><path d="M798.5,537.50V783.20" stroke="#5c5600" stroke-width="1" shape-rendering="crispEdges"/><path d="M804.5,537.50V783.20" stroke="#5c5600" stroke-width="1" shape-rendering="crispEdges"/><path d="M809.5,537.50V783.20" stroke="#5c5600" stroke-width="1" shape-rendering="crispEdges"/><path d="M814.5,537.50V783.20" stroke="#5c5600" stroke-width="1" shape-rendering="crispEdges"/><path d="M825.5,537.50V783.20" stroke="#5c5600" stroke-width="1" shape-rendering="crispEdges"/><path d="M831.5,537.50V783.20" stroke="#5c5600" stroke-width="1" shape-rendering="crispEdges"/><path d="M836.5,537.50V783.20" stroke="#5c5600" stroke-width="1" shape-rendering="crispEdges"/><path d="M842.5,537.50V783.20" stroke="#5c5600" stroke-width="1" shape-rendering="crispEdges"/><path d="M847.5,537.50V783.20" stroke="#5c5600" stroke-width="1" shape-rendering="crispEdges"/><path d="M853.5,537.50V783.20" stroke="#5c5600" stroke-width="1" shape-rendering="crispEdges"/><path d="M858.5,537.50V783.20" stroke="#5c5600" stroke-width="1" shape-rendering="crispEdges"/><path d="M864.5,537.50V783.20" stroke="#5c5600" stroke-width="1" shape-rendering="crispEdges"/><path d="M869.5,537.50V783.20" stroke="#5c5600" stroke-width="1" shape-rendering="crispEdges"/><path d="M875.5,537.50V783.20" stroke="#5c5600" stroke-width="1" shape-rendering="crispEdges"/><path d="M880.5,537.50V783.20" stroke="#5c5600" stroke-width="1" shape-rendering="crispEdges"/><path d="M886.5,537.50V783.20" stroke="#5c5600" stroke-width="1" shape-rendering="crispEdges"/><path d="M891.5,537.50V783.20" stroke="#5c5600" stroke-width="1" shape-rendering="crispEdges"/><path d="M896.5,537.50V783.20" stroke="#5c5600" stroke-width="1" shape-rendering="crispEdges"/><path d="M710.40,569.5H903.20" stroke="#a0a000" stroke-width="1" shape-rendering="crispEdges"/><path d="M710.40,599.5H903.20" stroke="#a0a000" stroke-width="1" shape-rendering="crispEdges"/><path d="M710.40,630.5H903.20" stroke="#a0a000" stroke-width="1" shape-rendering="crispEdges"/><path d="M710.40,660.5H903.20" stroke="#a0a000" stroke-width="1" shape-rendering="crispEdges"/><path d="M710.40,691.5H903.20" stroke="#a0a000" stroke-width="1" shape-rendering="crispEdges"/><path d="M710.40,721.5H903.20" stroke="#a0a000" stroke-width="1" shape-rendering="crispEdges"/><path d="M710.40,752.5H903.20" stroke="#a0a000" stroke-width="1" shape-rendering="crispEdges"/><path d="M738.5,537.50V783.20" stroke="#a0a000" stroke-width="1" shape-rendering="crispEdges"/><path d="M820.5,537.50V783.20" stroke="#a0a000" stroke-width="1" shape-rendering="crispEdges"/><path d="M802.4,781.0 L802.6,777.2 L803.0,770.9 L803.5,762.9 L803.9,754.4 L804.3,751.5 L804.8,744.4 L805.2,741.1 L805.7,741.0 L806.0,740.7 L806.6,734.4 L807.0,727.8 L807.3,729.0 L807.6,724.3 L808.0,720.6 L808.4,722.0 L808.9,720.5 L809.4,718.4 L809.8,716.0 L810.2,720.8 L810.8,716.9 L811.2,708.1 L811.6,706.0 L811.9,710.9 L812.3,710.2 L812.7,710.6 L813.2,694.9 L813.6,707.5 L814.0,707.4 L814.4,691.4 L814.9,701.2 L815.2,688.1 L815.6,701.9 L816.1,685.5 L816.5,684.3 L816.8,696.7 L817.1,691.5 L817.6,691.3 L817.9,695.1 L818.3,689.2 L818.6,687.3 L818.9,691.3 L819.5,667.5 L819.7,680.8 L820.2,687.8 L820.6,698.6 L820.9,697.0 L821.2,689.1 L821.5,684.2 L821.8,695.7 L822.1,694.1 L822.5,686.8 L823.0,696.4 L823.4,681.4 L823.7,685.7 L824.0,698.6 L824.3,683.9 L824.6,688.0 L824.9,675.2 L825.3,692.8 L825.7,681.5 L826.0,699.7 L826.3,688.8 L826.7,684.1 L827.1,694.0 L827.4,687.1 L827.7,690.4 L829.0,703.5 L828.0,672.0 L828.4,677.2 L828.7,683.8 L829.0,678.2 L829.3,678.0 L829.6,680.2 L829.9,676.7 L830.3,677.9 L830.8,686.8 L831.2,677.6 L831.6,679.2 L831.8,679.2 L832.3,674.6 L832.6,666.2 L833.0,672.1 L833.3,682.9 L833.8,689.6 L834.2,686.9 L834.7,682.6 L835.2,674.3 L835.6,677.4 L836.1,688.6 L836.6,673.0 L837.0,685.8 L837.4,676.7 L837.8,676.3 L838.2,687.8 L838.7,686.7 L839.2,684.1 L839.6,681.2 L839.8,689.0" stroke="#7dff1e" stroke-width="1.35" fill="none" stroke-linejoin="round" stroke-linecap="round" stroke-linejoin="miter"/><path d="M723.8,781.0 L724.3,756.6 L724.8,781.0" stroke="#7dff1e" stroke-width="1.3" fill="none" stroke-linejoin="round" stroke-linecap="round" /><path d="M710.40,782.5H903.20" stroke="#ffee30" stroke-width="1" shape-rendering="crispEdges"/><path d="M711.0,781.2 L841.2,781.2" stroke="#ff1a3c" stroke-width="2.6" fill="none" stroke-linejoin="round" stroke-linecap="round" stroke-linecap="butt"/></g><path d="M709.9,783.2V537.0H903.2" stroke="#5a5a5a" stroke-width="1" fill="none"/><path d="M710.4,783.7H903.7V537.5" stroke="#f4f4f4" stroke-width="1" fill="none"/><path d="M705,538.5H709" stroke="#000" stroke-width="1" shape-rendering="crispEdges"/><path d="M705,569.5H709" stroke="#000" stroke-width="1" shape-rendering="crispEdges"/><path d="M705,599.5H709" stroke="#000" stroke-width="1" shape-rendering="crispEdges"/><path d="M705,630.5H709" stroke="#000" stroke-width="1" shape-rendering="crispEdges"/><path d="M705,660.5H709" stroke="#000" stroke-width="1" shape-rendering="crispEdges"/><path d="M705,691.5H709" stroke="#000" stroke-width="1" shape-rendering="crispEdges"/><path d="M705,721.5H709" stroke="#000" stroke-width="1" shape-rendering="crispEdges"/><path d="M705,752.5H709" stroke="#000" stroke-width="1" shape-rendering="crispEdges"/><path d="M705,782.5H709" stroke="#000" stroke-width="1" shape-rendering="crispEdges"/><path d="M711.5,786V790" stroke="#000" stroke-width="1" shape-rendering="crispEdges"/><path d="M738.5,786V790" stroke="#000" stroke-width="1" shape-rendering="crispEdges"/><path d="M820.5,786V790" stroke="#000" stroke-width="1" shape-rendering="crispEdges"/><path d="M902.5,786V790" stroke="#000" stroke-width="1" shape-rendering="crispEdges"/></svg>
<span class="t" style="left:28.00px;top:533.14px;font-size:12px;letter-spacing:-0.834px;">1.0E+0</span>
<span class="t" style="left:30.70px;top:560.04px;font-size:12px;letter-spacing:-0.771px;">1.0E-1</span>
<span class="t" style="left:30.70px;top:586.94px;font-size:12px;letter-spacing:-0.771px;">1.0E-2</span>
<span class="t" style="left:30.70px;top:613.84px;font-size:12px;letter-spacing:-0.771px;">1.0E-3</span>
<span class="t" style="left:30.70px;top:640.74px;font-size:12px;letter-spacing:-0.771px;">1.0E-4</span>
<span class="t" style="left:30.70px;top:667.64px;font-size:12px;letter-spacing:-0.771px;">1.0E-5</span>
<span class="t" style="left:30.70px;top:694.54px;font-size:12px;letter-spacing:-0.771px;">1.0E-6</span>
<span class="t" style="left:30.70px;top:721.44px;font-size:12px;letter-spacing:-0.771px;">1.0E-7</span>
<span class="t" style="left:30.70px;top:748.34px;font-size:12px;letter-spacing:-0.771px;">1.0E-8</span>
<span class="t" style="left:30.70px;top:775.24px;font-size:12px;letter-spacing:-0.771px;">1.0E-9</span>
<span class="t" style="left:24.00px;top:802.14px;font-size:12px;letter-spacing:-0.638px;">1.0E-10</span>
<span class="t" style="left:58.00px;top:818.14px;font-size:12px;letter-spacing:-0.608px;">15:20</span>
<span class="t" style="left:88.20px;top:818.14px;font-size:12px;letter-spacing:-0.608px;">15:30</span>
<span class="t" style="left:131.80px;top:818.14px;font-size:12px;letter-spacing:-0.607px;">15:45</span>
<span class="t" style="left:175.80px;top:818.14px;font-size:12px;letter-spacing:-0.607px;">16:00</span>
<span class="t" style="left:220.60px;top:818.14px;font-size:12px;letter-spacing:-0.607px;">16:15</span>
<span class="t" style="left:266.80px;top:818.14px;font-size:12px;letter-spacing:-0.607px;">16:30</span>
<span class="t" style="left:176.00px;top:834.64px;font-size:12px;letter-spacing:-0.407px;">Time</span>
<span class="t" style="left:13.0px;top:671.5px;font-size:12px;letter-spacing:-0.25px;transform:translate(-50%,-50%) rotate(-90deg);">Pressure (mbar)</span>
<span class="t" style="left:353.48px;top:521.04px;font-size:12px;letter-spacing:-0.545px;">55.0</span>
<span class="t" style="left:353.48px;top:543.29px;font-size:12px;letter-spacing:-0.545px;">50.0</span>
<span class="t" style="left:353.48px;top:565.54px;font-size:12px;letter-spacing:-0.545px;">45.0</span>
<span class="t" style="left:353.48px;top:587.79px;font-size:12px;letter-spacing:-0.545px;">40.0</span>
<span class="t" style="left:353.48px;top:610.04px;font-size:12px;letter-spacing:-0.545px;">35.0</span>
<span class="t" style="left:353.48px;top:632.29px;font-size:12px;letter-spacing:-0.545px;">30.0</span>
<span class="t" style="left:353.48px;top:654.54px;font-size:12px;letter-spacing:-0.545px;">25.0</span>
<span class="t" style="left:353.48px;top:676.79px;font-size:12px;letter-spacing:-0.545px;">20.0</span>
<span class="t" style="left:353.48px;top:699.04px;font-size:12px;letter-spacing:-0.545px;">15.0</span>
<span class="t" style="left:353.48px;top:721.29px;font-size:12px;letter-spacing:-0.545px;">10.0</span>
<span class="t" style="left:359.69px;top:743.54px;font-size:12px;letter-spacing:-0.584px;">5.0</span>
<span class="t" style="left:359.69px;top:765.79px;font-size:12px;letter-spacing:-0.584px;">0.0</span>
<span class="t" style="left:355.97px;top:788.04px;font-size:12px;letter-spacing:-0.482px;">-5.0</span>
<span class="t" style="left:370.70px;top:802.64px;font-size:12px;letter-spacing:-0.607px;">15:20</span>
<span class="t" style="left:361.70px;top:818.64px;font-size:12px;letter-spacing:-0.159px;">5/1/2023</span>
<span class="t" style="left:431.50px;top:802.64px;font-size:12px;letter-spacing:-0.607px;">15:40</span>
<span class="t" style="left:422.50px;top:818.64px;font-size:12px;letter-spacing:-0.159px;">5/1/2023</span>
<span class="t" style="left:492.70px;top:802.64px;font-size:12px;letter-spacing:-0.608px;">16:00</span>
<span class="t" style="left:483.70px;top:818.64px;font-size:12px;letter-spacing:-0.159px;">5/1/2023</span>
<span class="t" style="left:587.20px;top:802.64px;font-size:12px;letter-spacing:-0.608px;">16:30</span>
<span class="t" style="left:578.20px;top:818.64px;font-size:12px;letter-spacing:-0.159px;">5/1/2023</span>
<span class="t" style="left:463.00px;top:834.64px;font-size:12px;letter-spacing:-0.407px;">Time</span>
<span class="t" style="left:342.6px;top:660px;font-size:12px;letter-spacing:-0.2px;transform:translate(-50%,-50%) rotate(-90deg);">Temperature (K)</span>
<span class="t" style="left:690.09px;top:532.44px;font-size:12px;letter-spacing:-0.934px;">40</span>
<span class="t" style="left:690.09px;top:562.94px;font-size:12px;letter-spacing:-0.934px;">35</span>
<span class="t" style="left:690.09px;top:593.44px;font-size:12px;letter-spacing:-0.934px;">30</span>
<span class="t" style="left:690.09px;top:623.94px;font-size:12px;letter-spacing:-0.934px;">25</span>
<span class="t" style="left:690.09px;top:654.44px;font-size:12px;letter-spacing:-0.934px;">20</span>
<span class="t" style="left:690.09px;top:684.94px;font-size:12px;letter-spacing:-0.934px;">15</span>
<span class="t" style="left:690.09px;top:715.44px;font-size:12px;letter-spacing:-0.934px;">10</span>
<span class="t" style="left:696.29px;top:745.94px;font-size:12px;letter-spacing:-0.467px;">5</span>
<span class="t" style="left:696.29px;top:776.44px;font-size:12px;letter-spacing:-0.467px;">0</span>
<span class="t" style="left:697.70px;top:791.14px;font-size:12px;letter-spacing:-0.608px;">15:20</span>
<span class="t" style="left:688.70px;top:806.14px;font-size:12px;letter-spacing:-0.159px;">5/1/2023</span>
<span class="t" style="left:806.50px;top:791.14px;font-size:12px;letter-spacing:-0.608px;">16:00</span>
<span class="t" style="left:797.50px;top:806.14px;font-size:12px;letter-spacing:-0.159px;">5/1/2023</span>
<span class="t" style="left:888.50px;top:791.14px;font-size:12px;letter-spacing:-0.608px;">16:30</span>
<span class="t" style="left:879.50px;top:806.14px;font-size:12px;letter-spacing:-0.159px;">5/1/2023</span>
<span class="t" style="left:797.30px;top:823.14px;font-size:12px;letter-spacing:-0.407px;">Time</span>
<span class="t" style="left:679.5px;top:660.5px;font-size:12px;letter-spacing:-0.1px;transform:translate(-50%,-50%) rotate(-90deg);">Counts/sec</span>
</div>
</body>
</html>
